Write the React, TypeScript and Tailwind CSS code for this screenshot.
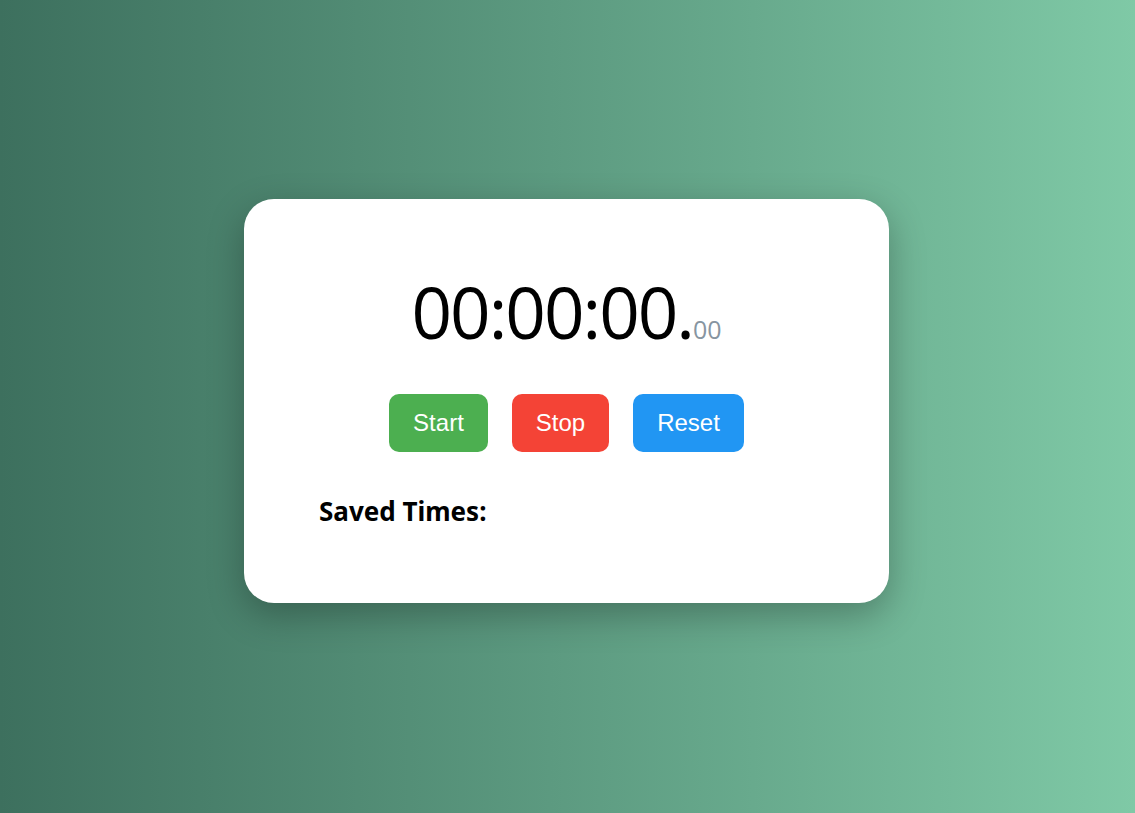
import { useState } from "react";

export default function App() {
  const [saved] = useState<string[]>([]);

  return (
    <div className="min-h-screen w-full flex items-center justify-center pb-[12px] pr-[2px] bg-gradient-to-r from-[#3d705e] to-[#7fc9a6]">
      <div className="w-[645px] h-[404px] bg-white rounded-[30px] shadow-[0_12px_36px_rgba(0,0,0,0.28)] flex flex-col items-center pt-[77px]">
        {/* Time display */}
        <div className="flex items-baseline text-black font-['Open_Sans',sans-serif] leading-none">
          <span className="text-[71px] tracking-[-2px]">00:00:00.</span>
          <span className="text-[25px] text-[#8795a1]">00</span>
        </div>

        {/* Controls */}
        <div className="flex gap-6 mt-[47px] font-['Liberation_Sans',Arial,sans-serif]">
          <button className="bg-[#4caf50] text-white text-[24px] leading-[28px] px-6 py-[15px] rounded-[10px]">Start</button>
          <button className="bg-[#f44336] text-white text-[24px] leading-[28px] px-6 py-[15px] rounded-[10px]">Stop</button>
          <button className="bg-[#2196f3] text-white text-[24px] leading-[28px] px-6 py-[15px] rounded-[10px]">Reset</button>
        </div>

        {/* Saved list */}
        <div className="self-stretch px-[75px] mt-[43px]">
          <h3 className="text-[26px] leading-[32px] font-bold text-black font-['Noto_Sans',sans-serif]">Saved Times:</h3>
          <ul>
            {saved.map((t, i) => (
              <li key={i}>{t}</li>
            ))}
          </ul>
        </div>
      </div>
    </div>
  );
}
